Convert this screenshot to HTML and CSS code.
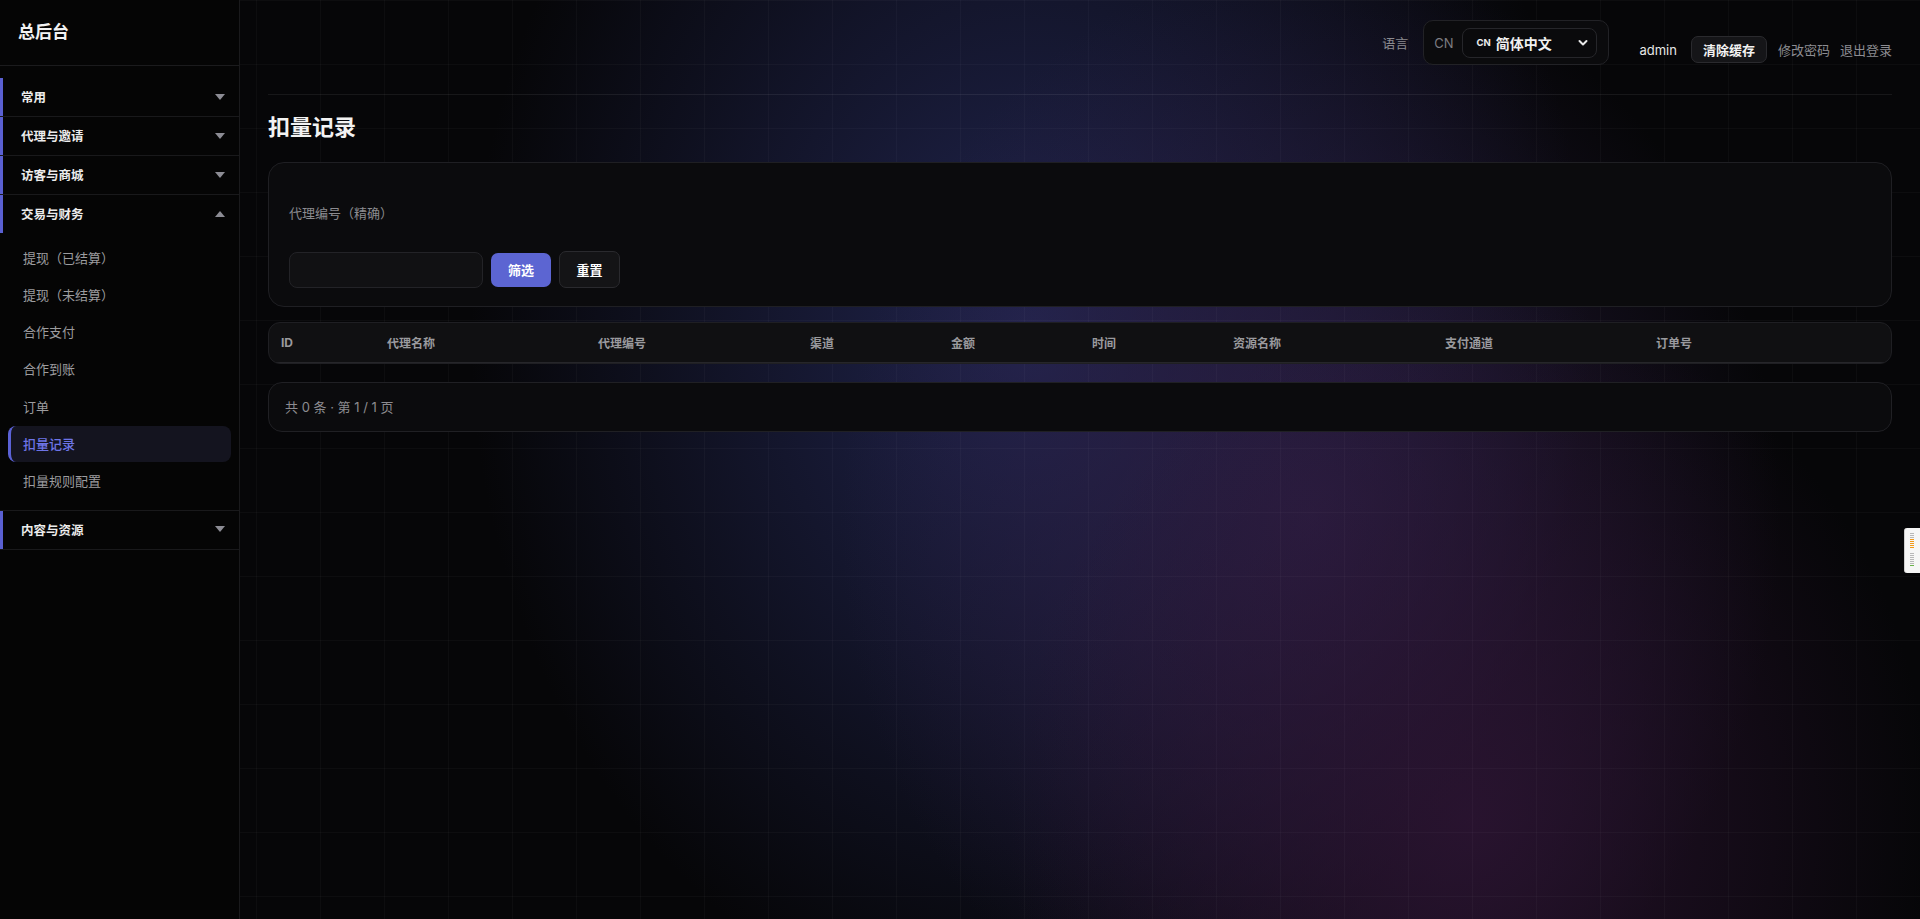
FILE: index.html
```html
<!DOCTYPE html>
<html lang="zh-CN">
<head>
<meta charset="utf-8">
<title>总后台 - 扣量记录</title>
<link rel="stylesheet" href="styles.css">
</head>
<body>
<aside class="sidebar">
  <div class="brand">总后台</div>
  <nav class="nav">
    <div class="group">
      <div class="group-head"><span>常用</span><i class="caret"></i></div>
    </div>
    <div class="group">
      <div class="group-head"><span>代理与邀请</span><i class="caret"></i></div>
    </div>
    <div class="group">
      <div class="group-head"><span>访客与商城</span><i class="caret"></i></div>
    </div>
    <div class="group">
      <div class="group-head"><span>交易与财务</span><i class="caret up"></i></div>
      <div class="items">
        <a class="item">提现（已结算）</a>
        <a class="item">提现（未结算）</a>
        <a class="item">合作支付</a>
        <a class="item">合作到账</a>
        <a class="item">订单</a>
        <a class="item active">扣量记录</a>
        <a class="item">扣量规则配置</a>
      </div>
    </div>
    <div class="group">
      <div class="group-head"><span>内容与资源</span><i class="caret"></i></div>
    </div>
  </nav>
</aside>

<main class="main">
  <header class="topbar">
    <div class="lang">
      <span class="lang-label">语言</span>
      <div class="lang-box">
        <span class="lang-code">CN</span>
        <div class="lang-select">
          <span class="flag">CN</span>
          <span class="lang-name">简体中文</span>
          <svg class="chev" width="10" height="8" viewBox="0 0 10 8"><path d="M1.5 2 L5 5.5 L8.5 2" fill="none" stroke="#e8e8e8" stroke-width="2" stroke-linecap="round" stroke-linejoin="round"/></svg>
        </div>
      </div>
    </div>
    <div class="user">
      <span class="uname">admin</span>
      <span class="btn-clear">清除缓存</span>
      <span class="link">修改密码</span>
      <span class="link">退出登录</span>
    </div>
  </header>

  <h1 class="page-title">扣量记录</h1>

  <section class="filter-card">
    <div class="field-label">代理编号（精确）</div>
    <div class="controls">
      <div class="input"></div>
      <span class="btn-primary">筛选</span>
      <span class="btn-secondary">重置</span>
    </div>
  </section>

  <div class="table">
    <div class="thead">
      <span>ID</span>
      <span>代理名称</span>
      <span>代理编号</span>
      <span>渠道</span>
      <span>金额</span>
      <span>时间</span>
      <span>资源名称</span>
      <span>支付通道</span>
      <span>订单号</span>
    </div>
  </div>

  <div class="pager">共 0 条 · 第 1 / 1 页</div>
</main>

<div class="ext-tab">
  <i class="g"></i><i class="g"></i><i class="g"></i><i class="o"></i><i class="o"></i><i class="o"></i><i class="o"></i><i class="o"></i>
  <b></b>
  <i class="g"></i><i class="g"></i><i class="g"></i><i class="g"></i><i class="g"></i><i class="g"></i><i class="gr"></i>
</div>
</body>
</html>
```

FILE: styles.css
```css
html, body {
  margin: 0;
  padding: 0;
}

body {
  display: flex;
  height: 919px;
  overflow: hidden;
  background: #050506;
  color: #e6e6e6;
  font-family: Inter, "Noto Sans CJK SC", "Noto Sans", sans-serif;
}

/* ---------- Sidebar ---------- */
.sidebar {
  width: 239px;
  flex-shrink: 0;
  background: #050505;
  border-right: 1px solid #1a1a1c;
}

.brand {
  height: 66px;
  box-sizing: border-box;
  padding: 0 0 4px 18px;
  display: flex;
  align-items: center;
  border-bottom: 1px solid #1b1b1d;
  font-size: 17px;
  font-weight: 700;
  color: #f2f2f2;
}

.nav {
  padding-top: 12px;
}

.group {
  border-bottom: 1px solid #19191b;
}

.group-head {
  height: 38px;
  box-sizing: border-box;
  padding: 0 14px 1px 18px;
  display: flex;
  align-items: center;
  justify-content: space-between;
  border-left: 3px solid #5a60d2;
  font-size: 12.5px;
  font-weight: 700;
  color: #ececec;
}

.caret {
  width: 0;
  height: 0;
  border-left: 5px solid transparent;
  border-right: 5px solid transparent;
  border-top: 6px solid #8c8c94;
}

.caret.up {
  border-top: 0;
  border-bottom: 6px solid #8c8c94;
}

.items {
  display: flex;
  flex-direction: column;
  gap: 1.33px;
  padding: 6px 8px 11px;
}

.item {
  height: 36px;
  display: flex;
  align-items: center;
  padding-left: 15px;
  border-radius: 8px;
  font-size: 13px;
  color: #9c9c9f;
}

.item.active {
  background: #14141f;
  border-left: 3px solid #5b62d6;
  padding-left: 12px;
  color: #6d74e6;
  font-weight: 500;
}

/* ---------- Main ---------- */
.main {
  flex: 1;
  height: 919px;
  box-sizing: border-box;
  padding: 0 28px;
  background:
    linear-gradient(rgba(255, 255, 255, 0.028) 1px, transparent 1px) 16px 0 / 64px 64px,
    linear-gradient(90deg, rgba(255, 255, 255, 0.028) 1px, transparent 1px) 16px 0 / 64px 64px,
    radial-gradient(460px 520px at 1230px 820px, rgba(44, 20, 50, 0.85), transparent),
    radial-gradient(470px 560px at 1070px 520px, rgba(46, 31, 70, 0.85), transparent),
    radial-gradient(560px 700px at 790px 330px, rgba(34, 38, 82, 0.95), transparent),
    #060608;
}

.topbar {
  height: 95px;
  box-sizing: border-box;
  padding-top: 20px;
  display: flex;
  justify-content: flex-end;
  align-items: flex-start;
  border-bottom: 1px solid rgba(255, 255, 255, 0.07);
}

.lang {
  display: flex;
  align-items: center;
  gap: 15px;
}

.lang-label {
  font-size: 13px;
  color: #8b8b90;
}

.lang-box {
  height: 45px;
  box-sizing: border-box;
  display: flex;
  align-items: center;
  gap: 9px;
  padding: 0 11px 0 10px;
  border: 1px solid #222226;
  border-radius: 10px;
  background: #0b0b0d;
}

.lang-code {
  font-size: 13px;
  color: #7d7d82;
}

.lang-select {
  width: 135px;
  height: 30px;
  box-sizing: border-box;
  display: flex;
  align-items: center;
  padding: 0 8px 0 13px;
  border: 1px solid #26262a;
  border-radius: 8px;
  background: #0a0a0c;
}

.flag {
  font-size: 9.5px;
  font-weight: 700;
  color: #eeeeee;
  margin-right: 5px;
}

.lang-name {
  font-size: 14px;
  font-weight: 700;
  color: #f0f0f0;
}

.chev {
  margin-left: auto;
}

.user {
  height: 27px;
  margin: 16px 0 0 30px;
  display: flex;
  align-items: center;
  font-size: 13px;
}

.uname {
  color: #e6e6e6;
  margin-right: 14px;
}

.btn-clear {
  height: 27px;
  box-sizing: border-box;
  display: flex;
  align-items: center;
  padding: 0 11px;
  margin-right: 11px;
  border: 1px solid #2a2a2e;
  border-radius: 7px;
  background: #151518;
  font-weight: 600;
  color: #f2f2f2;
}

.link {
  color: #8d8d92;
}

.link + .link {
  margin-left: 10px;
}

.page-title {
  margin: 17px 0 20px;
  font-size: 22px;
  line-height: 30px;
  font-weight: 700;
  color: #f2f2f2;
}

.filter-card {
  border: 1px solid #1f1f23;
  border-radius: 16px;
  background: #0b0b0d;
  padding: 41px 20px 18px;
}

.field-label {
  font-size: 13px;
  line-height: 18px;
  color: #8b8b90;
  margin-bottom: 29px;
}

.controls {
  display: flex;
  align-items: center;
  gap: 8px;
}

.input {
  width: 194px;
  height: 36px;
  box-sizing: border-box;
  border: 1px solid #232327;
  border-radius: 8px;
  background: #111113;
}

.btn-primary,
.btn-secondary {
  display: flex;
  align-items: center;
  justify-content: center;
  box-sizing: border-box;
  border-radius: 7px;
  font-size: 13px;
  font-weight: 700;
  color: #ffffff;
}

.btn-primary {
  width: 60px;
  height: 34px;
  background: #5c65d2;
}

.btn-secondary {
  width: 61px;
  height: 37px;
  border: 1px solid #2a2a2e;
  background: #141416;
}

.table {
  margin-top: 15px;
  border: 1px solid #1f1f23;
  border-radius: 12px;
  background: #101012;
  overflow: hidden;
}

.thead {
  height: 39px;
  display: grid;
  grid-template-columns: 106px 211px 212px 141px 141px 141px 212px 211px 1fr;
  align-items: center;
  padding-left: 12px;
  border-bottom: 1px solid #26262a;
  font-size: 12px;
  font-weight: 700;
  color: #9a9a9e;
}

.pager {
  margin-top: 18px;
  padding: 15px 16px;
  line-height: 18px;
  border: 1px solid #202024;
  border-radius: 14px;
  background: #0b0b0d;
  font-size: 13px;
  color: #8b8b90;
}

/* ---------- browser extension tab ---------- */
.ext-tab {
  position: fixed;
  right: 0;
  top: 528px;
  width: 16px;
  height: 45px;
  box-sizing: border-box;
  padding: 5px 0 0 5px;
  display: flex;
  flex-direction: column;
  gap: 1px;
  background: #f6f6f6;
  border-left: 1px solid #cfcfcf;
  border-radius: 3px 0 0 3px;
}

.ext-tab i {
  display: block;
  width: 4px;
  height: 1px;
  background: #b8b8b8;
}

.ext-tab i.o {
  background: #f29a1a;
}

.ext-tab i.gr {
  background: #6bb34a;
}

.ext-tab b {
  display: block;
  height: 3px;
}
```
